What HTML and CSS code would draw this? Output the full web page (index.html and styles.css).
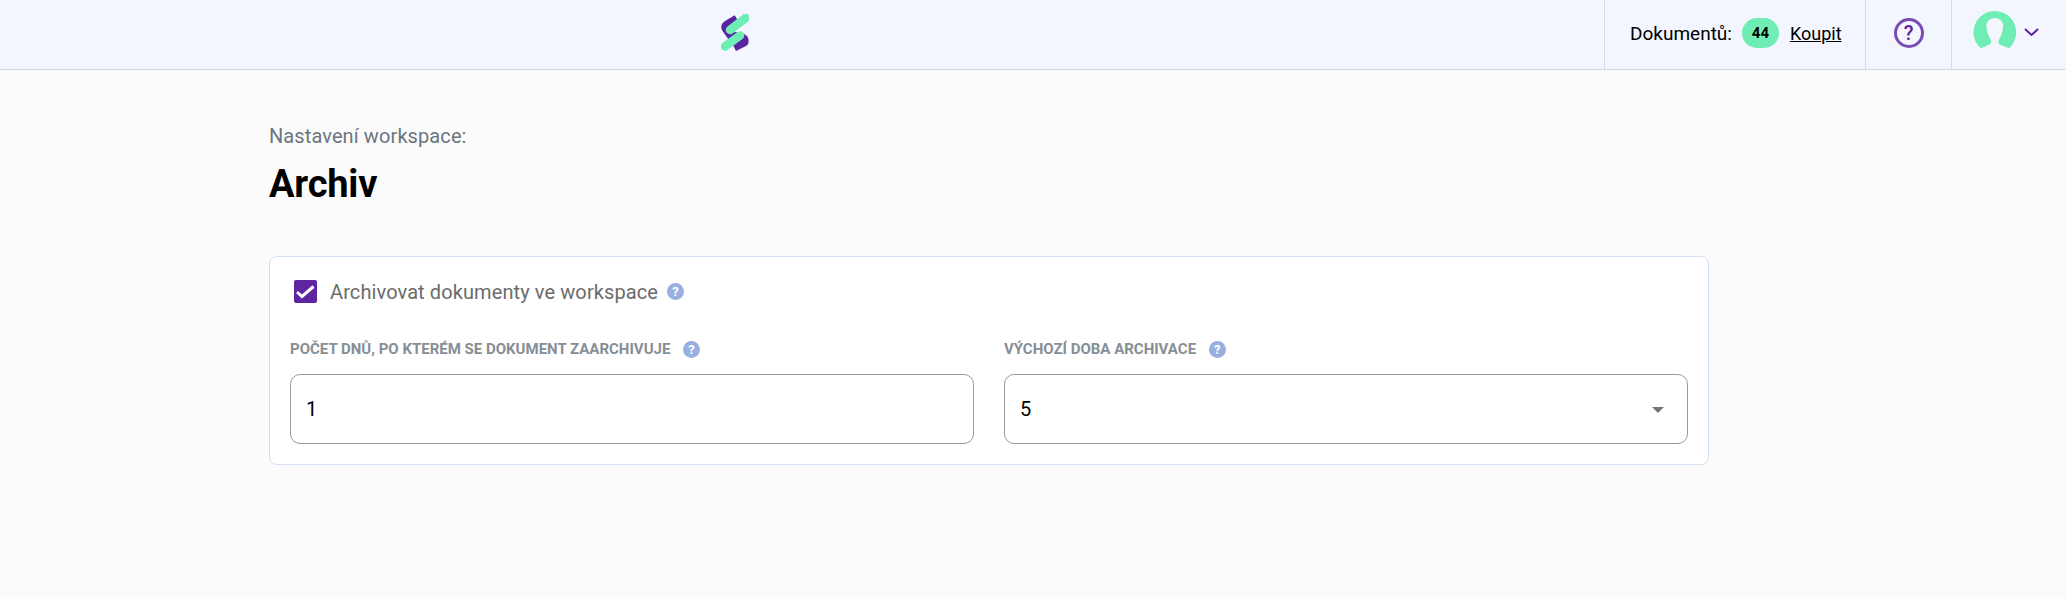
FILE: index.html

```html
<!DOCTYPE html>
<html lang="cs">
<head>
    <meta charset="UTF-8">
    <title>Archiv</title>
    <link rel="stylesheet" href="styles.css">
</head>
<body>
    <header class="topbar">
        <div class="topbar-logo">
            <svg width="28" height="38" viewBox="0 0 28 38">
                <path d="M16 5 L6 11 Q4 12.5 5.5 15 L10.5 22 L21 24 Q23.5 25 23 28 L13 33" fill="none" stroke="#5b23a0" stroke-width="9" stroke-linejoin="round"/>
                <path d="M9 16 L24.7 4" stroke="#6eedb4" stroke-width="8.5" stroke-linecap="round"/>
                <path d="M4 32.5 L19 21.5" stroke="#6eedb4" stroke-width="8.5" stroke-linecap="round"/>
            </svg>
        </div>
        <div class="topbar-cell topbar-docs">
            <span class="docs-label">Dokumentů:</span>
            <span class="badge">44</span>
            <a class="buy-link" href="#">Koupit</a>
        </div>
        <div class="topbar-cell topbar-help">
            <span class="help-ring">?</span>
        </div>
        <div class="topbar-cell topbar-user">
            <svg class="user-avatar" width="44" height="40" viewBox="0 0 44 40">
                <path d="M7.7 37.3 A21.3 21.3 0 1 1 36 37.3 L27 33.5 Q25 32 25.5 30 Q27 27 28.5 23 Q30.5 18 30 13.5 Q28.5 7 21.7 7 Q15 7 13.5 13.5 Q13 18 15 23 Q16.5 27 18 30 Q18.5 32 16.5 33.5 Z" fill="#6eedb4"/>
            </svg>
            <svg class="user-caret" width="15" height="9" viewBox="0 0 15 9">
                <path d="M1 1 L7.5 7 L14 1" fill="none" stroke="#5b23a0" stroke-width="2"/>
            </svg>
        </div>
    </header>

    <main class="content">
        <div class="page-kicker">Nastavení workspace:</div>
        <h1 class="page-title">Archiv</h1>

        <section class="card">
            <div class="check-row">
                <span class="checkbox">
                    <svg width="23" height="23" viewBox="0 0 23 23">
                        <path d="M3 12 L8 16.5 L19.5 6.5" fill="none" stroke="#fff" stroke-width="3"/>
                    </svg>
                </span>
                <span class="check-label">Archivovat dokumenty ve workspace</span>
                <span class="hint">?</span>
            </div>
            <div class="fields">
                <div class="field">
                    <label class="field-label" for="days">Počet dnů, po kterém se dokument zaarchivuje <span class="hint">?</span></label>
                    <input class="control" id="days" type="text" value="1">
                </div>
                <div class="field">
                    <label class="field-label" for="period">Výchozí doba archivace <span class="hint">?</span></label>
                    <div class="select-wrap">
                        <select class="control" id="period">
                            <option>5</option>
                        </select>
                        <svg class="select-arrow" width="12" height="6" viewBox="0 0 12 6">
                            <path d="M0 0 L12 0 L6 6 Z" fill="#757575"/>
                        </svg>
                    </div>
                </div>
            </div>
        </section>
    </main>
</body>
</html>
```

FILE: styles.css

```css
* {
    box-sizing: border-box;
}
body {
    margin: 0;
    min-height: 598px;
    font-family: 'Roboto', sans-serif;
    background-color: #fbfbfc;
    color: #000;
}
.topbar {
    display: flex;
    height: 70px;
    background-color: #f3f6fe;
    border-bottom: 1px solid #d5d9e6;
}
.topbar-logo {
    flex: 1;
    display: flex;
    align-items: flex-start;
    padding: 14px 0 0 721px;
}
.topbar-cell {
    display: flex;
    align-items: center;
    padding-bottom: 3px;
    border-left: 1px solid #d5d9e6;
}
.topbar-docs {
    width: 261px;
    padding-left: 25px;
    font-size: 18px;
}
.docs-label {
    font-size: 19px;
}
.badge {
    width: 37px;
    height: 30px;
    margin-left: 10px;
    border-radius: 15px;
    background-color: #6eedb4;
    font-size: 15px;
    font-weight: 700;
    line-height: 30px;
    text-align: center;
}
.buy-link {
    margin-left: 11px;
    color: #000;
}
.topbar-help {
    width: 86px;
    justify-content: center;
}
.help-ring {
    width: 30px;
    height: 30px;
    border: 3px solid #7a4bb0;
    border-radius: 50%;
    color: #5b23a0;
    font-size: 20px;
    font-weight: 500;
    line-height: 24px;
    text-align: center;
}
.topbar-user {
    width: 115px;
    padding-left: 21px;
}
.user-avatar {
    margin-bottom: 4px;
}
.user-caret {
    margin-left: 7px;
    margin-bottom: 1px;
}
.content {
    padding: 55px 357px 0 269px;
}
.page-kicker {
    font-size: 20px;
    letter-spacing: 0.1px;
    line-height: 23px;
    color: #6c757d;
}
.page-title {
    margin: 14px 0 0;
    font-size: 38px;
    font-weight: 700;
    letter-spacing: -0.2px;
    line-height: 44px;
}
.card {
    margin-top: 50px;
    padding: 23px 20px 20px;
    height: 209px;
    background-color: #fff;
    border: 1px solid #d3e1f3;
    border-radius: 8px;
}
.check-row {
    display: flex;
    align-items: center;
    height: 23px;
    padding-left: 4px;
    color: #6b6b6b;
    font-size: 20px;
    letter-spacing: 0.1px;
}
.checkbox {
    display: flex;
    align-items: center;
    justify-content: center;
    width: 23px;
    height: 23px;
    margin-right: 13px;
    border-radius: 2px;
    background-color: #5f249f;
}
.check-label {
    margin-right: 9px;
}
.hint {
    display: inline-block;
    width: 17px;
    height: 17px;
    border-radius: 50%;
    background-color: #98afe0;
    color: #fff;
    font-size: 13px;
    font-weight: 700;
    letter-spacing: 0;
    line-height: 17px;
    text-align: center;
    text-transform: none;
    vertical-align: middle;
}
.fields {
    display: grid;
    grid-template-columns: 1fr 1fr;
    gap: 30px;
    margin-top: 36px;
}
.field-label {
    display: block;
    height: 20px;
    color: #868e96;
    font-size: 15px;
    font-weight: 700;
    line-height: 20px;
    text-transform: uppercase;
}
.field-label .hint {
    margin-left: 9px;
    margin-top: -2px;
}
.control {
    display: block;
    width: 100%;
    height: 70px;
    margin-top: 15px;
    padding: 0 15px;
    border: 1px solid #9a9a9a;
    border-radius: 10px;
    background-color: #fff;
    color: #000;
    font-family: 'Roboto', sans-serif;
    font-size: 20px;
    appearance: none;
    outline: none;
}
.select-wrap {
    position: relative;
}
.select-arrow {
    position: absolute;
    right: 24px;
    top: 33px;
}
```
